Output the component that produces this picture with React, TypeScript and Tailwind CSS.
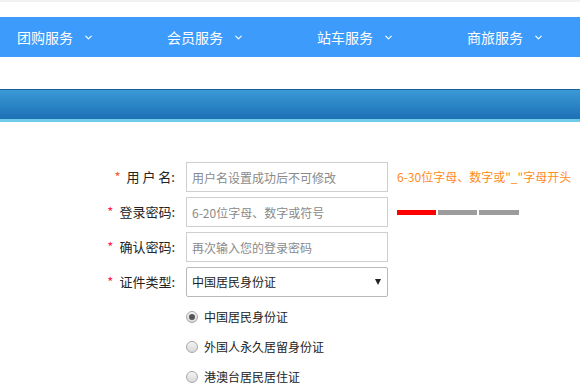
import { ChevronDown } from 'lucide-react';

const navItems = ['团购服务', '会员服务', '站车服务', '商旅服务'];

const fields = [
  { label: '用 户 名:', placeholder: '用户名设置成功后不可修改', star: 'text-[#ff5a1f]' },
  { label: '登录密码:', placeholder: '6-20位字母、数字或符号', star: 'text-[#ff2050]' },
  { label: '确认密码:', placeholder: '再次输入您的登录密码', star: 'text-[#ff2050]' },
];

const idTypes = ['中国居民身份证', '外国人永久居留身份证', '港澳台居民居住证'];

function Radio({ checked }: { checked?: boolean }) {
  return (
    <span className="w-[12px] h-[12px] rounded-full border border-[#a8a8a8] bg-gradient-to-b from-[#f4f4f4] to-[#d8d8d8] flex items-center justify-center shrink-0">
      {checked && <span className="w-[6px] h-[6px] rounded-full bg-[#555]" />}
    </span>
  );
}

export default function App() {
  return (
    <div className="w-[580px] h-[390px] overflow-hidden bg-white font-['Noto_Sans_CJK_SC',sans-serif] text-[#333]">
      <div className="h-[2px] bg-[#f2f2f2]" />
      <div className="h-[15px]" />

      <nav className="h-[40px] bg-[#3d9bfc] flex items-center overflow-hidden">
        {navItems.map((item) => (
          <div key={item} className="w-[150px] shrink-0 pl-[17px] flex items-center gap-[10px] text-white text-[14px]">
            <span>{item}</span>
            <ChevronDown className="w-[11px] h-[11px]" strokeWidth={2.5} />
          </div>
        ))}
      </nav>

      <div className="h-[32px]" />

      <div className="border-t border-[#1b5f99]">
        <div className="h-[29px] bg-gradient-to-b from-[#3a9ad6] to-[#1c70b6]" />
        <div className="h-[3px] bg-[#6fcbea]" />
      </div>

      <div className="pt-[40px] flex flex-col gap-[5px]">
        {fields.map((f, i) => (
          <div key={f.label} className="flex items-center h-[30px]">
            <label className="w-[176px] text-right text-[13px] text-[#222] pr-[1px]">
              <span className={`${f.star} mr-[6px]`}>*</span>
              {f.label}
            </label>
            <input
              placeholder={f.placeholder}
              className="ml-[10px] w-[202px] h-[30px] border border-[#cfcfcf] px-[5px] text-[12px] outline-none placeholder:text-[#8a8a8a]"
            />
            {i === 0 && (
              <span className="ml-[9px] text-[12px] text-[#ff8c1a] whitespace-nowrap">6-30位字母、数字或"_"字母开头</span>
            )}
            {i === 1 && (
              <div className="ml-[9px] flex gap-[2px]">
                <span className="w-[39px] h-[5px] bg-[#ff0000]" />
                <span className="w-[39px] h-[5px] bg-[#9c9c9c]" />
                <span className="w-[40px] h-[5px] bg-[#9c9c9c]" />
              </div>
            )}
          </div>
        ))}

        <div className="flex items-center h-[30px]">
          <label className="w-[176px] text-right text-[13px] text-[#222] pr-[1px]">
            <span className="text-[#ff2050] mr-[6px]">*</span>
            证件类型:
          </label>
          <div className="ml-[10px] w-[202px] h-[30px] border border-[#b9b9b9] rounded-[2px] px-[5px] pr-[6px] flex items-center justify-between text-[12px] text-[#222]">
            <span>中国居民身份证</span>
            <span className="w-0 h-0 border-l-[3.5px] border-r-[3.5px] border-t-[6px] border-l-transparent border-r-transparent border-t-[#222]" />
          </div>
        </div>

        <div className="ml-[186px] flex flex-col">
          {idTypes.map((t, i) => (
            <div key={t} className="h-[30px] flex items-center gap-[6px] text-[12px] text-[#222]">
              <Radio checked={i === 0} />
              <span>{t}</span>
            </div>
          ))}
        </div>
      </div>
    </div>
  );
}
